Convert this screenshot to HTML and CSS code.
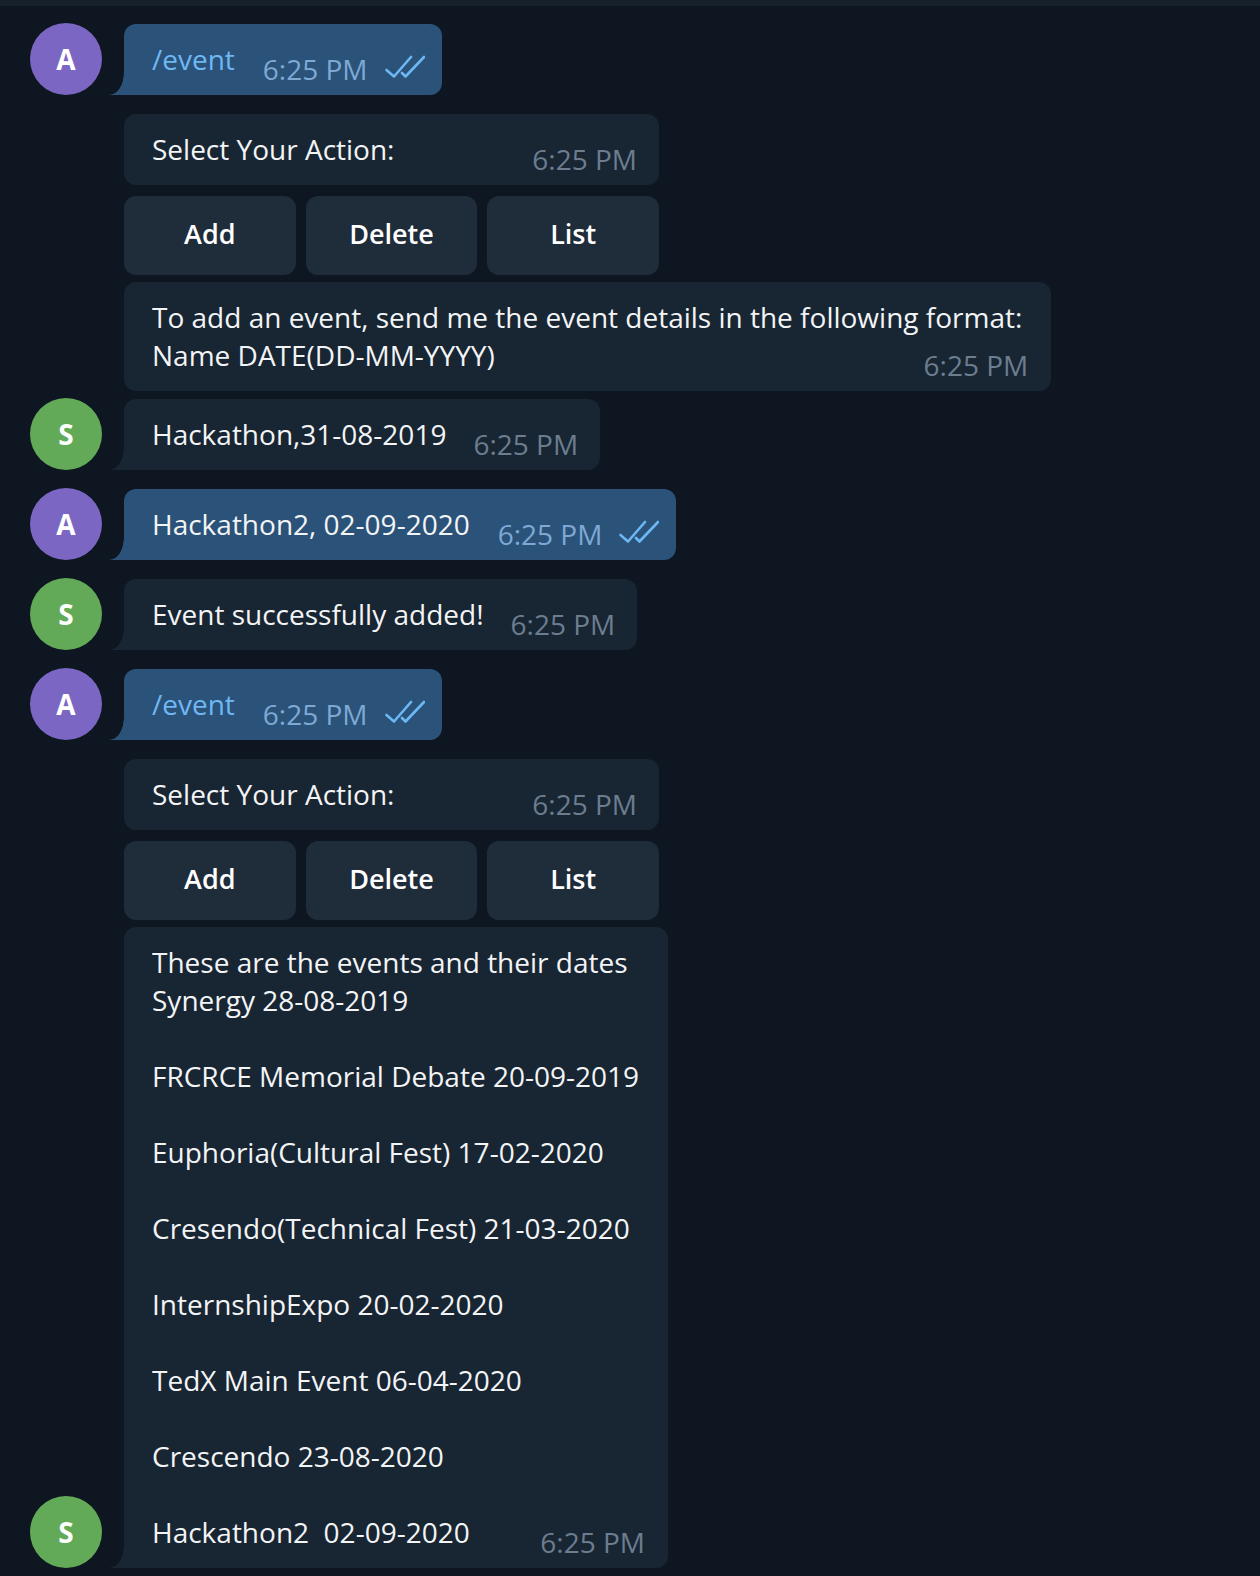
FILE: index.html
```html
<!DOCTYPE html>
<html lang="en">
<head>
<meta charset="utf-8">
<title>Chat</title>
<link rel="stylesheet" href="styles.css">
</head>
<body>
<div class="topbar"></div>
<main class="chat">

  <section class="group">
    <div class="avatar a">A</div>
    <div class="msgs">
      <div class="bubble out tail">
        <span class="text link">/event</span>
        <span class="meta">6:25 PM<svg class="checks" viewBox="0 0 40 23" width="40" height="23"><path d="M1.5 15 L9 21.5 L26 2"/><path d="M17 18 L20.5 21.5 L39 2"/></svg></span>
      </div>
    </div>
  </section>

  <section class="group">
    <div class="avatar s">S</div>
    <div class="msgs">
      <div class="bubble in wide">
        <span class="text">Select Your Action:</span>
        <span class="meta">6:25 PM</span>
      </div>
      <div class="kb">
        <div class="btn">Add</div>
        <div class="btn">Delete</div>
        <div class="btn">List</div>
      </div>
      <div class="bubble in multi">
        <span class="text">To add an event, send me the event details in the following format:
Name DATE(DD-MM-YYYY)</span>
        <span class="meta">6:25 PM</span>
      </div>
      <div class="bubble in tail">
        <span class="text">Hackathon,31-08-2019</span>
        <span class="meta">6:25 PM</span>
      </div>
    </div>
  </section>

  <section class="group">
    <div class="avatar a">A</div>
    <div class="msgs">
      <div class="bubble out tail">
        <span class="text">Hackathon2, 02-09-2020</span>
        <span class="meta">6:25 PM<svg class="checks" viewBox="0 0 40 23" width="40" height="23"><path d="M1.5 15 L9 21.5 L26 2"/><path d="M17 18 L20.5 21.5 L39 2"/></svg></span>
      </div>
    </div>
  </section>

  <section class="group">
    <div class="avatar s">S</div>
    <div class="msgs">
      <div class="bubble in tail">
        <span class="text">Event successfully added!</span>
        <span class="meta">6:25 PM</span>
      </div>
    </div>
  </section>

  <section class="group">
    <div class="avatar a">A</div>
    <div class="msgs">
      <div class="bubble out tail">
        <span class="text link">/event</span>
        <span class="meta">6:25 PM<svg class="checks" viewBox="0 0 40 23" width="40" height="23"><path d="M1.5 15 L9 21.5 L26 2"/><path d="M17 18 L20.5 21.5 L39 2"/></svg></span>
      </div>
    </div>
  </section>

  <section class="group">
    <div class="avatar s">S</div>
    <div class="msgs">
      <div class="bubble in wide">
        <span class="text">Select Your Action:</span>
        <span class="meta">6:25 PM</span>
      </div>
      <div class="kb">
        <div class="btn">Add</div>
        <div class="btn">Delete</div>
        <div class="btn">List</div>
      </div>
      <div class="bubble in multi tail">
        <span class="text">These are the events and their dates
Synergy 28-08-2019

FRCRCE Memorial Debate 20-09-2019

Euphoria(Cultural Fest) 17-02-2020

Cresendo(Technical Fest) 21-03-2020

InternshipExpo 20-02-2020

TedX Main Event 06-04-2020

Crescendo 23-08-2020

Hackathon2  02-09-2020</span>
        <span class="meta">6:25 PM</span>
      </div>
    </div>
  </section>

</main>
</body>
</html>
```

FILE: styles.css
```css
* {
  box-sizing: border-box;
  margin: 0;
  padding: 0;
}

html,
body {
  background: #0e1621;
}

body {
  width: 1260px;
  min-height: 1576px;
  font-family: "Open Sans", "Noto Sans", sans-serif;
  color: #f3f4f5;
}

.topbar {
  height: 6px;
  background: #17212b;
}

.chat {
  display: flex;
  flex-direction: column;
  gap: 19px;
  padding: 18px 0 0 30px;
}

.group {
  display: flex;
  align-items: flex-end;
  gap: 22px;
}

.avatar {
  flex: none;
  width: 72px;
  height: 72px;
  margin-top: -1px;
  border-radius: 50%;
  display: flex;
  align-items: center;
  justify-content: center;
  font-size: 28px;
  font-weight: 700;
  color: #ffffff;
}

.avatar.a {
  background: #7b67c3;
}

.avatar.s {
  background: #62aa57;
}

.msgs {
  display: flex;
  flex-direction: column;
  align-items: flex-start;
  gap: 8px;
}

.bubble {
  position: relative;
  display: flex;
  align-items: flex-end;
  padding: 16px 22px 17px 28px;
  border-radius: 12px;
  background: var(--bg);
  font-size: 28px;
  line-height: 38px;
}

.bubble.in {
  --bg: #182533;
}

.bubble.out {
  --bg: #2b5278;
}

.text {
  white-space: pre-wrap;
}

.link {
  color: #6fb8f4;
}

.meta {
  margin-left: 27px;
  font-size: 28px;
  line-height: 18px;
  white-space: nowrap;
  color: #6b7d8e;
}

.out .meta {
  margin-left: 28px;
  color: #7ea9d4;
}

.out {
  padding-right: 17px;
}

.checks {
  margin-left: 17px;
  vertical-align: 2px;
  fill: none;
  stroke: #6cb8f5;
  stroke-width: 2.6;
  stroke-linecap: round;
  stroke-linejoin: round;
}

.wide {
  width: 535px;
}

.wide .meta {
  margin-left: auto;
}

.multi {
  display: grid;
  padding-right: 29px;
}

.multi .text,
.multi .meta {
  grid-area: 1 / 1;
}

.multi .meta {
  justify-self: end;
  align-self: end;
  margin-left: 0;
  margin-right: -6px;
}

.tail {
  border-bottom-left-radius: 0;
}

.tail::before {
  content: "";
  position: absolute;
  left: -14px;
  bottom: 0;
  width: 14px;
  height: 22px;
  background: radial-gradient(ellipse 14px 22px at 0 0, transparent 96%, var(--bg) 100%);
}

.kb {
  display: grid;
  grid-template-columns: repeat(3, 1fr);
  gap: 10px;
  width: 535px;
  margin: 3px 0 -1px;
}

.btn {
  height: 79px;
  display: flex;
  align-items: center;
  justify-content: center;
  padding-bottom: 4px;
  border-radius: 12px;
  background: #1f2c3a;
  font-size: 27px;
  font-weight: 600;
  color: #ffffff;
}
```
